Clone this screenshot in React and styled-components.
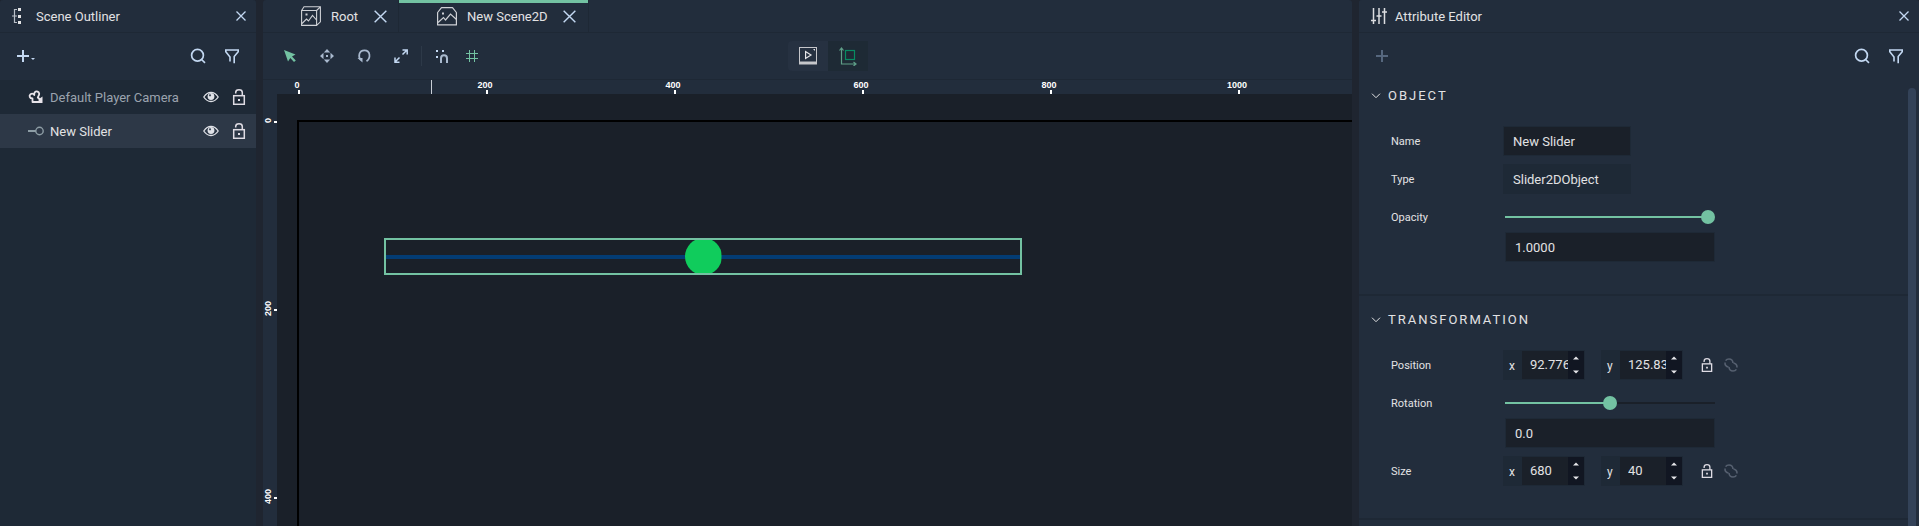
import React from "react";
import styled, { createGlobalStyle, css } from "styled-components";

const c = {
  panel: "#222d3c",
  line: "#1e2835",
  list: "#1e2936",
  selected: "#2d3847",
  gutter: "#1f2530",
  canvas: "#1a2029",
  green: "#73c2a2",
  text: "#e2e2e4",
  muted: "#9ba3ae",
  icon: "#c3d8f2",
};

const Global = createGlobalStyle`
  *, *::before, *::after { box-sizing: border-box; }
  body { margin: 0; background: ${c.gutter}; color: ${c.text}; font: 13px/16px Roboto, sans-serif; }
  button, input { font: inherit; color: inherit; margin: 0; padding: 0; border: 0; background: none; border-radius: 0; }
  h1, h2, ul { margin: 0; padding: 0; font: inherit; list-style: none; }
  svg { display: block; flex: none; }
`;

const Layout = styled.div`
  display: grid;
  grid-template-columns: 256px minmax(0, 1fr) 560px;
  column-gap: 7px;
  height: 100vh;
  overflow: hidden;
`;

const Panel = styled.section`
  display: flex;
  flex-direction: column;
  min-width: 0;
  min-height: 0;
  background: ${(p) => p.$bg || c.panel};
  border-radius: 3px 3px 0 0;
`;

const PanelHeader = styled.header`
  display: flex;
  align-items: center;
  gap: ${(p) => p.$gap}px;
  height: 33px;
  padding: 0 9px 0 12px;
  background: ${c.panel};
  border-bottom: 1px solid ${c.line};
  border-radius: 3px 3px 0 0;
  flex: none;
`;

const Title = styled.h1`
  flex: 1;
  padding-top: 1px;
`;

const IconButton = styled.button`
  display: flex;
  align-items: center;
  justify-content: center;
  width: ${(p) => p.$w || 20}px;
  height: 20px;
  flex: none;
  color: ${(p) => p.$color || c.icon};
`;

const Toolbar = styled.div`
  display: flex;
  align-items: center;
  gap: 14px;
  height: 47px;
  padding: 0 ${(p) => p.$right || 14}px 1px ${(p) => p.$left || 14}px;
  background: ${c.panel};
  flex: none;
`;

const Spacer = styled.div`
  flex: 1;
`;

const OutlineRow = styled.li`
  display: flex;
  align-items: center;
  height: 34px;
  padding: 0 7px 0 28px;
  gap: 8px;
  background: ${(p) => (p.$selected ? c.selected : c.list)};
  color: ${(p) => (p.$selected ? c.text : c.muted)};
`;

const RowName = styled.span`
  flex: 1;
  margin-left: -2px;
  padding-top: 1px;
  white-space: nowrap;
`;

/* Scene view */

const Tabs = styled.nav`
  display: flex;
  height: 33px;
  border-bottom: 1px solid ${c.line};
  flex: none;
`;

const Tab = styled.div`
  display: flex;
  align-items: center;
  height: 32px;
  padding: 0 8px 0 38px;
  border-right: 1px solid ${c.line};
  ${(p) => p.$active && css`box-shadow: inset 0 3px ${c.green};`}
`;

const TabName = styled.button`
  display: flex;
  align-items: center;
  gap: 10px;
  white-space: nowrap;

  span { padding-top: 2px; }
`;

const TabClose = styled(IconButton)`
  margin-left: 12px;
`;

const ToolSlot = styled.div`
  display: flex;
  align-items: center;
  flex: 1;
  gap: ${(p) => p.$gap || 0}px;
`;

const Divider = styled.div`
  width: 1px;
  height: 20px;
  background: #2d3948;
`;

const ModeSwitch = styled.div`
  display: flex;
  height: 30px;
  margin-left: 40px;
`;

const ModeButton = styled.button`
  display: flex;
  align-items: center;
  justify-content: center;
  width: 40px;
  background: ${(p) => (p.$active ? "#1e2a35" : "#263141")};
  border-radius: ${(p) => (p.$active ? 0 : "4px 0 0 4px")};
`;

const Stage = styled.div`
  display: grid;
  grid-template: 14px minmax(0, 1fr) / 14px minmax(0, 1fr);
  flex: 1;
  min-height: 0;
  border-top: 1px solid ${c.line};
  margin-top: -1px;
`;

const RulerTop = styled.div`
  grid-column: 1 / -1;
  position: relative;
  display: flex;
  padding-left: 36px;
  overflow: hidden;
  font: bold 9px/10px "Liberation Sans", sans-serif;
  color: #fff;
`;

const TickTop = styled.div`
  flex: 0 0 188px;
  display: flex;
  flex-direction: column;
  align-items: flex-start;

  span { width: 30px; margin-left: -17px; text-align: center; }
  &::after { content: ""; width: 2px; height: 4px; margin-left: -1px; background: #fff; }
`;

const CursorMark = styled.div`
  position: absolute;
  left: 168px;
  top: 0;
  width: 1px;
  height: 14px;
  background: #c9ced6;
`;

const RulerLeft = styled.div`
  display: flex;
  flex-direction: column;
  padding-top: 28px;
  overflow: hidden;
  font: bold 9px/11px "Liberation Sans", sans-serif;
  color: #fff;
`;

const TickLeft = styled.div`
  flex: 0 0 188px;
  display: flex;
  align-items: flex-start;

  span { width: 11px; height: 30px; margin-top: -17px; text-align: center; writing-mode: vertical-rl; transform: rotate(180deg); }
  &::after { content: ""; width: 3px; height: 2px; margin-top: -1px; background: #fff; }
`;

const Canvas = styled.div`
  background: ${c.canvas};
  padding: 26px 0 0 20px;
  overflow: hidden;
`;

const SceneFrame = styled.div`
  position: relative;
  height: 100%;
  border: solid #000;
  border-width: 2px 0 0 2px;
`;

const SliderNode = styled.div`
  position: absolute;
  left: 85px;
  top: 116px;
  width: 638px;
  height: 37px;
  border: 2px solid ${c.green};
  display: flex;
  align-items: center;
  justify-content: center;
  background: linear-gradient(#033c74, #033c74) center / 100% 4px no-repeat;
`;

const SliderKnob = styled.div`
  flex: none;
  width: 37px;
  height: 37px;
  border-radius: 50%;
  background: #10cc5c;
  clip-path: inset(2px 0);
`;

/* Attribute editor */

const Scroller = styled.div`
  display: flex;
  flex: 1;
  min-height: 0;
  padding-right: 3px;
`;

const Sections = styled.div`
  flex: 1;
  overflow: hidden;
`;

const ScrollBar = styled.div`
  width: 8px;
  margin-top: 8px;
  background: #334258;
  border-radius: 4px 4px 0 0;
`;

const Section = styled.section`
  padding: ${(p) => (p.$first ? 8 : 16)}px 0 32px;
  border-bottom: 2px solid ${c.line};
`;

const SectionTitle = styled.button`
  display: flex;
  align-items: center;
  gap: 7px;
  height: 16px;
  padding: 0 12px;
  letter-spacing: 2px;
`;

const Fields = styled.div`
  display: grid;
  grid-template-columns: 112px 1fr;
  row-gap: 8px;
  padding: 22px 0 0 32px;
`;

const Label = styled.label`
  height: 30px;
  font-size: 11px;
  line-height: 32px;
`;

const Box = styled.input`
  display: block;
  height: 30px;
  width: ${(p) => p.$w}px;
  padding: 0 9px;
  background: ${(p) => (p.readOnly ? c.list : c.canvas)};
  border: 1px solid ${c.list};
  margin-left: ${(p) => p.$indent || 0}px;
`;

const RangeStack = styled.div`
  display: flex;
  flex-direction: column;
`;

const Range = styled.input`
  appearance: none;
  width: 210px;
  height: 30px;
  margin-left: 2px;

  &::-webkit-slider-runnable-track {
    height: 2px;
    background: linear-gradient(to right, ${c.green} ${(p) => p.$fill}%, ${c.canvas} ${(p) => p.$fill}%);
  }
  &::-webkit-slider-thumb {
    appearance: none;
    width: 14px;
    height: 14px;
    margin-top: -6px;
    border-radius: 50%;
    background: ${c.green};
  }
`;

const VectorRow = styled.div`
  display: flex;
  align-items: center;
  height: 30px;
`;

const Axes = styled.div`
  display: flex;
  gap: 16px;
  margin-right: 12px;
`;

const Axis = styled.div`
  display: flex;
  width: 82px;
  height: 30px;
  border: 1px solid ${c.list};
  background: ${c.canvas};
`;

const AxisName = styled.label`
  width: 18px;
  padding-left: 5px;
  font-size: 12px;
  line-height: 30px;
  background: ${c.list};
`;

const AxisInput = styled.input`
  width: 46px;
  padding-left: 8px;
`;

const Stepper = styled.div`
  display: flex;
  flex-direction: column;
  width: 16px;
  background: #111622;
`;

const StepButton = styled.button`
  flex: 1;
  display: flex;
  align-items: center;
  justify-content: center;
`;

const stroke = { fill: "none", stroke: "currentColor" };

const CloseIcon = ({ size = 10, w = 1.3 }) => (
  <svg width={size} height={size} viewBox="0 0 10 10" {...stroke} strokeWidth={w}>
    <path d="M.5.5l9 9M9.5.5l-9 9" />
  </svg>
);
const SearchIcon = () => (
  <svg width="16" height="16" viewBox="0 0 16 16" {...stroke} strokeWidth="1.7">
    <circle cx="7.5" cy="7.3" r="5.9" />
    <path d="M11 11l4 3.8" />
  </svg>
);
const FilterIcon = () => (
  <svg width="16" height="16" viewBox="0 0 16 16" {...stroke} strokeWidth="1.6">
    <path d="M6 13.5V9L1.8 3.8V2h12.4v1.8L10.2 8.6V15.3" />
  </svg>
);
const OutlinerIcon = () => (
  <svg width="10" height="16" viewBox="0 0 10 16" fill="#e4e4e6">
    <path d="M6 0h3v3H6zM6 7h3v3H6zM6 13h3v3H6z" />
    <path d="M5 1.5H2.5v13H5M0 8h5" fill="none" stroke="#b9bfc8" strokeWidth="1.2" />
  </svg>
);
const EditorIcon = () => (
  <svg width="16" height="16" viewBox="0 0 16 16" stroke="#dcdde0" strokeWidth="1.5" fill="none">
    <path d="M2.5 0v16M8 0v16M13.5 0v16M0 12.5h5M5.5 8h5M11 4h5" />
  </svg>
);
const AddMenuIcon = () => (
  <svg width="18" height="14" viewBox="0 0 18 14" {...stroke} strokeWidth="2">
    <path d="M0 7h12M6 1v12" />
    <path d="M14 9h4l-2 2z" fill="currentColor" stroke="none" />
  </svg>
);
const PlusIcon = () => (
  <svg width="12" height="12" viewBox="0 0 12 12" {...stroke} strokeWidth="2">
    <path d="M0 6h12M6 0v12" />
  </svg>
);
const CameraIcon = () => (
  <svg width="16" height="16" viewBox="0 0 16 16" fill="none" stroke="#e8e4ea" strokeWidth="1.8">
    <path d="M4.500 13V9.500C1.500 9.500.8 6.500 2.500 5.200C4 4.200 5.500 4.800 6.300 6C5.800 3.500 7.500 2 9.300 2.500C11.500 3 11.800 5.500 10.300 7.300L9.800 8.500L11.500 10V13z" strokeLinejoin="round" />
    <path d="M11 10l3.500-2.500v6.500H11z" fill="#e8e4ea" stroke="none" />
  </svg>
);
const SliderIcon = () => (
  <svg width="16" height="16" viewBox="0 0 16 16" fill="none" stroke="#8d9da5" strokeWidth="1.4">
    <path d="M0 8h8" strokeWidth="2" />
    <circle cx="11.500" cy="8" r="3.700" />
  </svg>
);
const EyeIcon = () => (
  <svg width="16" height="12" viewBox="0 0 16 12" fill="none" stroke="#e0e2e8" strokeWidth="1.3">
    <path d="M.8 6C3 2.600 5.500 1.300 8 1.300S13 2.600 15.200 6C13 9.400 10.500 10.500 8 10.500S3 9.400.8 6z" />
    <circle cx="8" cy="5.500" r="3.400" fill="#e0e2e8" stroke="none" />
    <circle cx="7" cy="4.300" r="1.100" fill="#3c4756" stroke="none" />
  </svg>
);
const LockIcon = ({ size = 16 }) => (
  <svg width={size} height={size} viewBox="0 0 16 16" fill="none" stroke="#dfdce4" strokeWidth="1.5">
    <rect x="2.700" y="6.700" width="10.600" height="8.600" />
    <path d="M4.700 4.500V3.500C4.700 1.600 6 .8 8 .8s3.300.8 3.300 2.700v3" />
    <rect x="7" y="10" width="2" height="2" fill="#dfdce4" stroke="none" />
  </svg>
);
const LinkIcon = () => (
  <svg width="14" height="14" viewBox="0 0 14 14" fill="none" stroke="#566070" strokeWidth="1.600">
    <path d="M9 5C8.800 2.500 7 1 5 1C3.500 1 2.300 1.600 1.600 2.600M1 4.500C.9 6.800 2.500 8.600 4.500 9" />
    <path d="M5 9C5.200 11.500 7 13 9 13C10.500 13 11.700 12.400 12.400 11.400M13 9.500C13.100 7.200 11.500 5.400 9.500 5" />
  </svg>
);
const RootIcon = () => (
  <svg width="20" height="20" viewBox="0 0 20 20" fill="none" stroke="#cfd1d6" strokeWidth="1.100">
    <path d="M.6 4.500h15v14.900H.6zM.6 4.500L3 .8h16.400v15L15.600 19.400M15.600 4.500L19.400.8" />
    <path d="M1 17.500l4.500-4.500 2 2 4-5.500 4 4.500" />
    <path d="M4.500 7.500h2v2h-2z" fill="#cfd1d6" stroke="none" />
  </svg>
);
const SceneIcon = () => (
  <svg width="20" height="20" viewBox="0 0 20 20" fill="none" stroke="#cfd1d6" strokeWidth="1.200">
    <path d="M.6 18.900V6.500L4.500 1.600h11l3.900 4.900v12.400z" strokeLinejoin="round" />
    <path d="M1 16.500l5.500-5 2 2.500 5-6 6 5.500" />
    <path d="M5 6.500h2v2H5z" fill="#cfd1d6" stroke="none" />
  </svg>
);
const ArrowIcon = () => (
  <svg width="12" height="12" viewBox="0 0 12 12" fill="currentColor">
    <path d="M0 0l11.500 4.500-3.500 2 3.800 4-1.800 1.500-3.700-4L4 11.500z" />
  </svg>
);
const MoveIcon = () => (
  <svg width="14" height="14" viewBox="0 0 14 14" fill="#a9b9ce">
    <path d="M7 0l3.200 3.500H3.800zM7 14l3.200-3.500H3.800zM0 7l3.500-3.200v6.400zM14 7l-3.500-3.200v6.400zM6 6h2v2H6z" />
  </svg>
);
const RotateIcon = () => (
  <svg width="14" height="14" viewBox="0 0 14 14" fill="none" stroke="#a9b9ce" strokeWidth="1.700">
    <path d="M9.500 12.200C14 9 13.500 1.300 7.500 1.300C1.600 1.300 1 8 3.800 11" />
    <path d="M.5 9h5v4.500z" fill="#a9b9ce" stroke="none" />
  </svg>
);
const ScaleIcon = () => (
  <svg width="14" height="14" viewBox="0 0 14 14" {...stroke} strokeWidth="1.500">
    <path d="M8.500 1h4.700v4.500M8.500 5.500L13 1M1 8.500v4.700h4.500M1 13l4.500-4.500" />
  </svg>
);
const SnapIcon = () => (
  <svg width="14" height="14" viewBox="0 0 14 14" fill="currentColor">
    <path d="M1 1h2v2H1zM7 1h2v2H7zM1 7h2v2H1z" />
    <path d="M6 14V9.500C6 5.300 12 5.300 12 9.500V14" fill="none" stroke="#a9b9ce" strokeWidth="2" />
  </svg>
);
const GridIcon = () => (
  <svg width="12" height="12" viewBox="0 0 12 12" {...stroke}>
    <path d="M3.500 0v12M8.500 0v12M0 3.500h12M0 8.500h12" />
  </svg>
);
const PreviewIcon = () => (
  <svg width="18" height="18" viewBox="0 0 18 18" fill="none" stroke="#c5c6ca">
    <rect x=".5" y=".5" width="17" height="15" />
    <path d="M0 16h18" strokeWidth="3" />
    <path d="M6.600 4.500v7l5.400-3.500z" stroke="#e6e6ea" strokeWidth="1.200" />
    <path d="M14 2h2v2z" fill="#e6e6ea" stroke="none" />
  </svg>
);
const AxesIcon = () => (
  <svg width="18" height="19" viewBox="0 0 18 19" fill="none" stroke="#5f9f88" strokeWidth="1.200">
    <path d="M2.500 1v16H17M.5 3.500l2-2.500 2 2.500M14.500 15l2.500 2-2.500 2" />
    <rect x="6.500" y="3.500" width="9" height="9" stroke="#078b62" />
  </svg>
);
const Chevron = () => (
  <svg width="10" height="6" viewBox="0 0 10 6" {...stroke} strokeWidth="1">
    <path d="M1 .7l4 4 4-4" />
  </svg>
);
const Caret = ({ down }) => (
  <svg width="6" height="4" viewBox="0 0 6 4" fill="#e6e6ea">
    <path d={down ? "M0 .5h6L3 3.500z" : "M0 3.500h6L3 .5z"} />
  </svg>
);

const OutlineItem = ({ icon, name, selected }) => (
  <OutlineRow $selected={selected}>
    {icon}
    <RowName>{name}</RowName>
    <IconButton aria-label={`Toggle visibility of ${name}`}><EyeIcon /></IconButton>
    <IconButton aria-label={`Lock ${name}`}><LockIcon /></IconButton>
  </OutlineRow>
);

const SceneTab = ({ icon, name, active }) => (
  <Tab $active={active}>
    <TabName>{icon}<span>{name}</span></TabName>
    <TabClose aria-label={`Close ${name}`}><CloseIcon size={13} w={1.1} /></TabClose>
  </Tab>
);

const AxisField = ({ id, axis, value }) => (
  <Axis>
    <AxisName htmlFor={id}>{axis}</AxisName>
    <AxisInput id={id} defaultValue={value} />
    <Stepper>
      <StepButton aria-label={`Increase ${axis}`}><Caret /></StepButton>
      <StepButton aria-label={`Decrease ${axis}`}><Caret down /></StepButton>
    </Stepper>
  </Axis>
);

const VectorField = ({ label, x, y }) => (
  <>
    <Label as="span">{label}</Label>
    <VectorRow role="group" aria-label={label}>
      <Axes>
        <AxisField id={`${label}-x`} axis="x" value={x} />
        <AxisField id={`${label}-y`} axis="y" value={y} />
      </Axes>
      <IconButton $w={24} aria-label={`Lock ${label}`}><LockIcon size={14} /></IconButton>
      <IconButton $w={24} aria-label={`Link ${label}`}><LinkIcon /></IconButton>
    </VectorRow>
  </>
);

const RangeField = ({ label, value, min, max, fill }) => (
  <>
    <Label htmlFor={label}>{label}</Label>
    <RangeStack>
      <Range id={label} type="range" min={min} max={max} step="any" defaultValue={value} $fill={fill} />
      <Box $w={210} $indent={2} aria-label={`${label} value`} defaultValue={value} />
    </RangeStack>
  </>
);

const topTicks = [0, 200, 400, 600, 800, 1000];
const leftTicks = [0, 200, 400];

export default function App() {
  return (
    <>
      <Global />
      <Layout>
        <Panel $bg={c.list}>
          <PanelHeader $gap={14}>
            <OutlinerIcon />
            <Title>Scene Outliner</Title>
            <IconButton $w={12} aria-label="Close Scene Outliner"><CloseIcon /></IconButton>
          </PanelHeader>
          <Toolbar $left={16}>
            <IconButton aria-label="Add object"><AddMenuIcon /></IconButton>
            <Spacer />
            <IconButton aria-label="Search objects"><SearchIcon /></IconButton>
            <IconButton aria-label="Filter objects"><FilterIcon /></IconButton>
          </Toolbar>
          <ul>
            <OutlineItem icon={<CameraIcon />} name="Default Player Camera" />
            <OutlineItem icon={<SliderIcon />} name="New Slider" selected />
          </ul>
        </Panel>

        <Panel>
          <Tabs>
            <SceneTab icon={<RootIcon />} name="Root" />
            <SceneTab icon={<SceneIcon />} name="New Scene2D" active />
          </Tabs>
          <Toolbar $left={17} $right={17}>
            <ToolSlot $gap={17}>
              <IconButton aria-label="Select" $color={c.green}><ArrowIcon /></IconButton>
              <IconButton aria-label="Move"><MoveIcon /></IconButton>
              <IconButton aria-label="Rotate"><RotateIcon /></IconButton>
              <ToolSlot $gap={10}>
                <IconButton aria-label="Scale"><ScaleIcon /></IconButton>
                <Divider />
                <IconButton aria-label="Snap"><SnapIcon /></IconButton>
                <IconButton aria-label="Grid" $color={c.green}><GridIcon /></IconButton>
              </ToolSlot>
            </ToolSlot>
            <ModeSwitch>
              <ModeButton aria-label="Preview"><PreviewIcon /></ModeButton>
              <ModeButton aria-label="Edit" $active><AxesIcon /></ModeButton>
            </ModeSwitch>
            <ToolSlot />
          </Toolbar>
          <Stage>
            <RulerTop>
              {topTicks.map((n) => <TickTop key={n}><span>{n}</span></TickTop>)}
              <CursorMark />
            </RulerTop>
            <RulerLeft>
              {leftTicks.map((n) => <TickLeft key={n}><span>{n}</span></TickLeft>)}
            </RulerLeft>
            <Canvas>
              <SceneFrame>
                <SliderNode><SliderKnob /></SliderNode>
              </SceneFrame>
            </Canvas>
          </Stage>
        </Panel>

        <Panel>
          <PanelHeader $gap={8}>
            <EditorIcon />
            <Title>Attribute Editor</Title>
            <IconButton $w={12} aria-label="Close Attribute Editor"><CloseIcon /></IconButton>
          </PanelHeader>
          <Toolbar $left={13} $right={13}>
            <IconButton aria-label="Add attribute" $color="#56677e"><PlusIcon /></IconButton>
            <Spacer />
            <IconButton aria-label="Search attributes"><SearchIcon /></IconButton>
            <IconButton aria-label="Filter attributes"><FilterIcon /></IconButton>
          </Toolbar>
          <Scroller>
            <Sections>
              <Section $first>
                <h2><SectionTitle><Chevron />OBJECT</SectionTitle></h2>
                <Fields>
                  <Label htmlFor="name">Name</Label>
                  <Box id="name" $w={128} defaultValue="New Slider" />
                  <Label htmlFor="type">Type</Label>
                  <Box id="type" $w={128} readOnly defaultValue="Slider2DObject" />
                  <RangeField label="Opacity" value="1.0000" min={0} max={1} fill={96} />
                </Fields>
              </Section>
              <Section>
                <h2><SectionTitle><Chevron />TRANSFORMATION</SectionTitle></h2>
                <Fields>
                  <VectorField label="Position" x="92.776" y="125.83" />
                  <RangeField label="Rotation" value="0.0" min={-180} max={180} fill={50} />
                  <VectorField label="Size" x="680" y="40" />
                </Fields>
              </Section>
            </Sections>
            <ScrollBar />
          </Scroller>
        </Panel>
      </Layout>
    </>
  );
}
